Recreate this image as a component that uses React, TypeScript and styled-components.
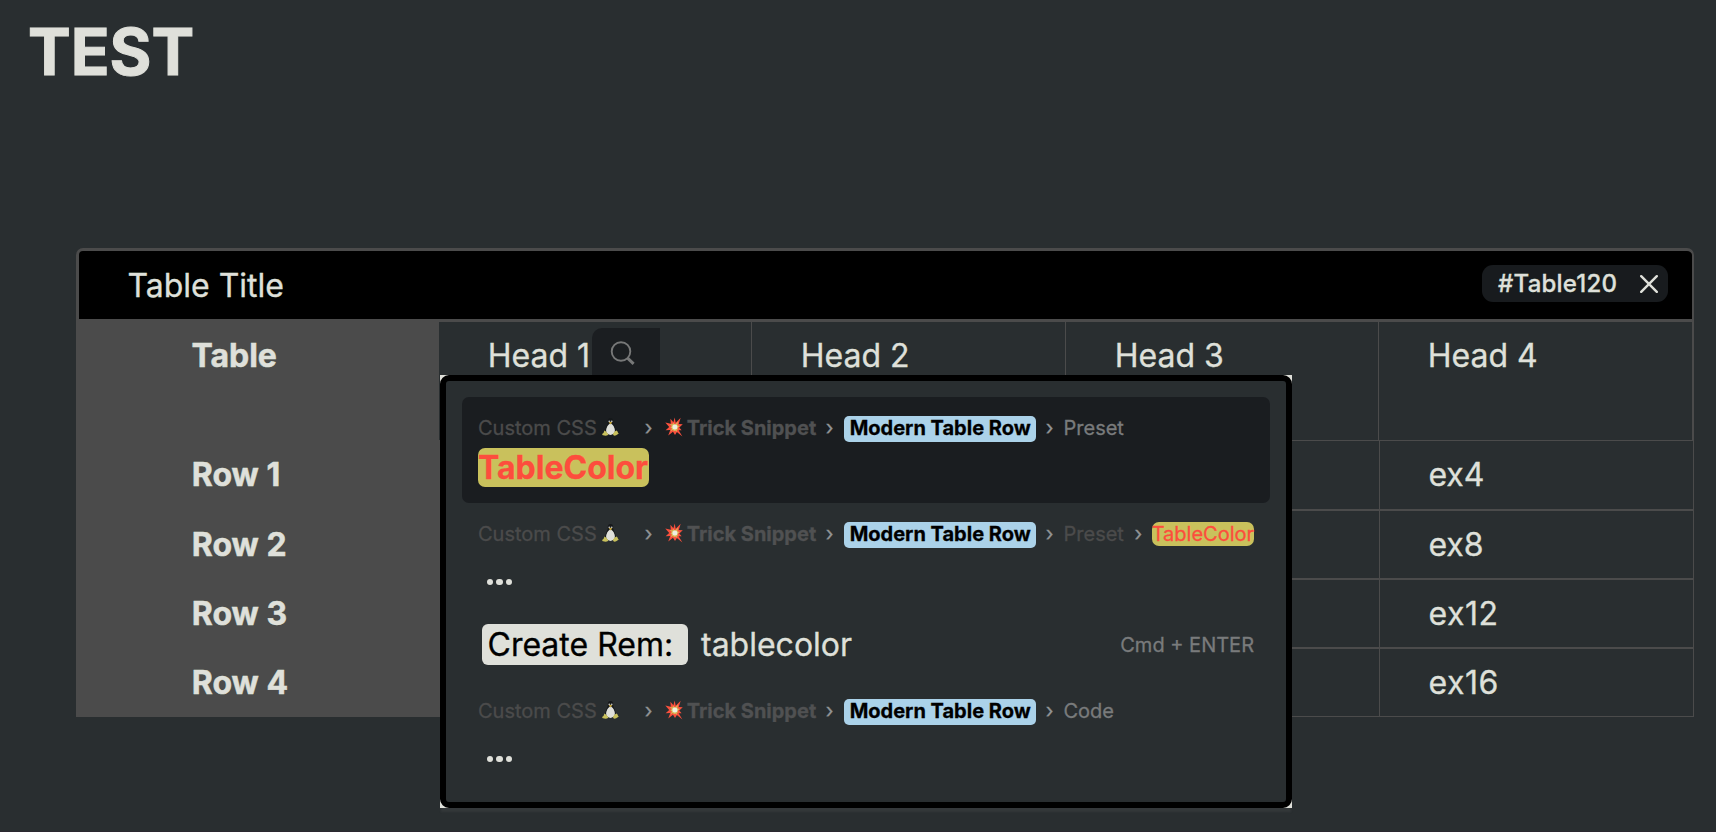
import React from 'react';
import styled, { createGlobalStyle } from 'styled-components';

const ink = '#dfe0da';
const line = '#4b4b4b';
const surface = '#292e30';
const muted = '#797b7c';

const GlobalStyle = createGlobalStyle`
  * { box-sizing: border-box; }
  body {
    margin: 0;
    background: ${surface};
    color: ${ink};
    font-family: Inter, 'Liberation Sans', sans-serif;
    -webkit-text-stroke: 0.3px;
    overflow: hidden;
  }
`;

const Page = styled.main`
  position: relative;
  height: 832px;
  background: ${surface};
  border-bottom: 1px solid #2b2830;
`;

const PageTitle = styled.h1`
  margin: 0;
  height: 248px;
  padding: 13px 0 0 28px;
  font-size: 64px;
  font-weight: 700;
  line-height: 77px;
  -webkit-text-stroke: 1px;
`;

const Table = styled.section`
  width: 1618px;
  margin-left: 76px;
  font-size: 32px;
  line-height: 39px;
`;

const TitleBar = styled.header`
  display: flex;
  justify-content: space-between;
  height: 74px;
  padding: 0 24px 0 48.4px;
  border: 3px solid ${line};
  border-right-width: 2px;
  border-radius: 7px 7px 0 0;
  background: #000;
`;

const TitleText = styled.span`
  padding-top: 15px;
`;

const Tag = styled.span`
  display: flex;
  justify-content: space-between;
  width: 186px;
  height: 37px;
  margin-top: 14px;
  padding: 0 10px 0 16px;
  border-radius: 11px;
  background: #181b1e;
  font-size: 24px;
  font-weight: 500;
  letter-spacing: 0.2px;
  line-height: 37px;

  svg { margin-top: 10px; }
`;

const HeadRow = styled.div`
  display: grid;
  grid-template-columns: 362px 313px 314px 313px 1fr;
  height: 118px;
  border-right: 2px solid ${line};
`;

const HeadCell = styled.div`
  position: relative;
  padding: 14px 0 0 48.8px;
  border-left: 1px solid ${line};
`;

const Row = styled.div<{ $first?: boolean }>`
  display: grid;
  grid-template-columns: 363px repeat(3, 1fr) 315px;
  height: ${(p) => (p.$first ? 70 : 69)}px;
`;

const Label = styled.div<{ $head?: boolean }>`
  padding: ${(p) => (p.$head ? 14 : 15)}px 0 0 ${(p) => (p.$head ? 115.4 : 115.8)}px;
  background: ${line};
  font-weight: 700;
  -webkit-text-stroke: 0.5px;
`;

const Cell = styled.div<{ $wide?: boolean }>`
  padding: 14px 0 0 48.4px;
  border-top: 1px solid ${line};
  border-bottom: 1px solid ${line};
  border-left: 1px solid ${line};
  letter-spacing: ${(p) => (p.$wide ? '0.6px' : 'normal')};

  &:last-child { border-right: 1px solid ${line}; }
`;

const SearchBox = styled.span`
  position: absolute;
  top: 6px;
  left: 153px;
  width: 68px;
  height: 47px;
  padding: 13px 0 0 18px;
  border-top-left-radius: 10px;
  background: #1b1e21;

  svg { display: block; }
`;

const PopupFrame = styled.div`
  position: absolute;
  top: 375px;
  left: 440px;
  width: 852px;
  height: 433px;
  background: ${ink};
  box-shadow: 0 5px 2px -1px rgba(110, 112, 112, 0.16);
`;

const Popup = styled.div`
  height: 100%;
  padding: 16px;
  border: 6px solid #000;
  border-radius: 9px;
  background: ${surface};
`;

const Result = styled.div<{ $selected?: boolean }>`
  height: 106px;
  padding: 19px 16px 0;
  border-radius: 7px;
  background: ${(p) => (p.$selected ? '#1a1d20' : 'transparent')};
`;

const Crumbs = styled.div`
  display: flex;
  align-items: flex-start;
  height: 26px;
  font-size: 20px;
  line-height: 24px;
  white-space: nowrap;
`;

const Crumb = styled.span<{ $bright?: boolean; $bold?: boolean }>`
  color: ${(p) => (p.$bright ? muted : p.$bold ? '#505152' : line)};
  font-weight: ${(p) => (p.$bold ? 700 : 400)};
`;

const Separator = styled.span<{ $before?: number; $after?: number }>`
  width: 8px;
  margin-left: ${(p) => p.$before ?? 10}px;
  margin-right: ${(p) => p.$after ?? 9.8}px;
  color: #929495;
`;

const Penguin = styled.svg`
  margin: 2px 0 0 5px;
`;

const Burst = styled.svg`
  margin: 1px 4px 0 0;
`;

const RowPill = styled.span`
  width: 192px;
  height: 26px;
  padding-left: 6px;
  border-radius: 5px;
  background: #abd2e9;
  color: #000;
  font-weight: 700;
`;

const ColorPill = styled.span<{ $large?: boolean }>`
  display: block;
  width: ${(p) => (p.$large ? '171px' : '102px')};
  height: ${(p) => (p.$large ? '39px' : '24px')};
  margin-top: ${(p) => (p.$large ? '6px' : '0')};
  border-radius: 7px;
  background: #c9c15c;
  color: #fd4d3d;
  font-size: ${(p) => (p.$large ? '32px' : '20px')};
  font-weight: ${(p) => (p.$large ? 700 : 400)};
  line-height: ${(p) => (p.$large ? '39px' : '24px')};
`;

const Dots = styled.div`
  display: flex;
  gap: 3.3px;
  padding: 31.2px 0 0 9px;
`;

const Dot = styled.i`
  width: 6.2px;
  height: 6.2px;
  border-radius: 50%;
  background: ${ink};
`;

const CreateRow = styled.div`
  display: flex;
  align-items: flex-start;
  height: 71px;
  padding: 15px 16px 0 20px;
  font-size: 32px;
  line-height: 41px;
`;

const CreatePill = styled.span`
  width: 206px;
  height: 41px;
  margin-right: 13px;
  padding-left: 5.5px;
  border-radius: 6px;
  background: ${ink};
  color: #000;
`;

const Shortcut = styled.span`
  margin: 8px 0 0 auto;
  color: ${muted};
  font-size: 20px;
  line-height: 26px;
`;

const PenguinIcon = () => (
  <Penguin width="17" height="18" viewBox="0 0 17 18">
    <path d="M8.5 0C6.2 0 5.6 1.8 5.8 4.4C5.8 6.4 3.3 9 3.2 13.2L5 16.8H12L13.8 13.2C13.7 9 11.2 6.4 11.2 4.4C11.4 1.8 10.8 0 8.5 0Z" fill="#15181a" />
    <circle cx="7.3" cy="3.3" r="0.9" fill="#b9bab6" />
    <circle cx="9.7" cy="3.3" r="0.9" fill="#b9bab6" />
    <path d="M8.5 5.4C6.2 6 4 9.6 4.1 13.1C4.3 15.6 6.3 16.9 8.5 16.9S12.7 15.6 12.9 13.1C13 9.6 10.8 6 8.5 5.4Z" fill={ink} />
    <path d="M6.8 4.5L8.5 3.8L10.2 4.5L8.5 6.4Z" fill="#c9a93c" />
    <path d="M2.4 12.6L4.3 13.7L6.4 16.6C5.7 18 3.2 17.9 0.2 17.1C0.3 15.4 0.8 15 1.5 14.9Z" fill="#c9c15c" />
    <path d="M14.5 12.6L12.7 13.4L11 15.7C11.1 17.8 12.7 18.1 14.2 17.2L16.9 15.6C16 15 15.8 14 15.4 13.2Z" fill="#c9c15c" />
  </Penguin>
);

const BurstIcon = () => (
  <Burst width="18" height="20" viewBox="0 0 18 20">
    <path d="M10.7 5.8L15.7 0.8L13.7 7L17.8 7.2L14.3 10.4L16.6 13.2L13.6 13.2L17.4 19.4L11.9 15.1L10 18L8 14.7L3.2 18.5L5.3 13L0.6 13.2L4.2 9.9L0.3 5.4L5.8 6.8L5.4 1.8L8.4 5.2L9.7 0.6Z" fill="#f9503d" />
    <path d="M10.3 7.6L13 4.4L12.2 8.3L14.6 9L12.3 10.9L13.4 12.4L11.6 12.4L12.1 14.8L10.1 13.4L8.8 14.5L8.2 12.7L5.6 14.2L7 11.5L5.4 10.4L7 9L4.5 7.1L7.6 7.6L8 5.5L9.1 7.1Z" fill="#d3c45c" />
    <circle cx="9.9" cy="9.9" r="2.5" fill="#efeee0" />
  </Burst>
);

const Chevron = ({ before, after }: { before?: number; after?: number }) => (
  <Separator $before={before} $after={after}>›</Separator>
);

type Leaf = { name: string; dim?: boolean; match?: string };

const Breadcrumb = ({ name, dim, match }: Leaf) => (
  <Crumbs>
    <Crumb>Custom CSS</Crumb>
    <PenguinIcon />
    <Chevron before={26} after={12} />
    <BurstIcon />
    <Crumb $bold>Trick Snippet</Crumb>
    <Chevron before={9.5} after={10} />
    <RowPill>Modern Table Row</RowPill>
    <Chevron />
    <Crumb $bright={!dim}>{name}</Crumb>
    {match && <Chevron before={10.6} after={9.2} />}
    {match && <ColorPill>{match}</ColorPill>}
  </Crumbs>
);

const Ellipsis = () => (
  <Dots>
    <Dot />
    <Dot />
    <Dot />
  </Dots>
);

const rows = [
  ['Row 1', 'ex4'],
  ['Row 2', 'ex8'],
  ['Row 3', 'ex12'],
  ['Row 4', 'ex16'],
];

export default function App() {
  return (
    <Page>
      <GlobalStyle />
      <PageTitle>TEST</PageTitle>
      <Table>
        <TitleBar>
          <TitleText>Table Title</TitleText>
          <Tag>
            #Table120
            <svg width="18" height="18" viewBox="0 0 18 18" fill="none" stroke={ink} strokeWidth="2.4" strokeLinecap="round">
              <path d="M1.2 1.2L16.8 16.8M16.8 1.2L1.2 16.8" />
            </svg>
          </Tag>
        </TitleBar>
        <HeadRow>
          <Label $head>Table</Label>
          <HeadCell>
            Head 1
            <SearchBox>
              <svg width="26" height="26" viewBox="0 0 26 26" fill="none" stroke="#777878">
                <circle cx="11" cy="10.5" r="9.3" strokeWidth="1.9" />
                <path d="M17.6 17.1L23.6 22.8" strokeWidth="3" />
              </svg>
            </SearchBox>
          </HeadCell>
          <HeadCell>Head 2</HeadCell>
          <HeadCell>Head 3</HeadCell>
          <HeadCell>Head 4</HeadCell>
        </HeadRow>
        {rows.map(([label, value], i) => (
          <Row key={label} $first={i === 0}>
            <Label>{label}</Label>
            <Cell />
            <Cell />
            <Cell />
            <Cell $wide={value.length > 3}>{value}</Cell>
          </Row>
        ))}
      </Table>
      <PopupFrame>
        <Popup>
          <Result $selected>
            <Breadcrumb name="Preset" />
            <ColorPill $large>TableColor</ColorPill>
          </Result>
          <Result>
            <Breadcrumb name="Preset" dim match="TableColor" />
            <Ellipsis />
          </Result>
          <CreateRow>
            <CreatePill>Create Rem:</CreatePill>
            tablecolor
            <Shortcut>Cmd + ENTER</Shortcut>
          </CreateRow>
          <Result>
            <Breadcrumb name="Code" />
            <Ellipsis />
          </Result>
        </Popup>
      </PopupFrame>
    </Page>
  );
}
